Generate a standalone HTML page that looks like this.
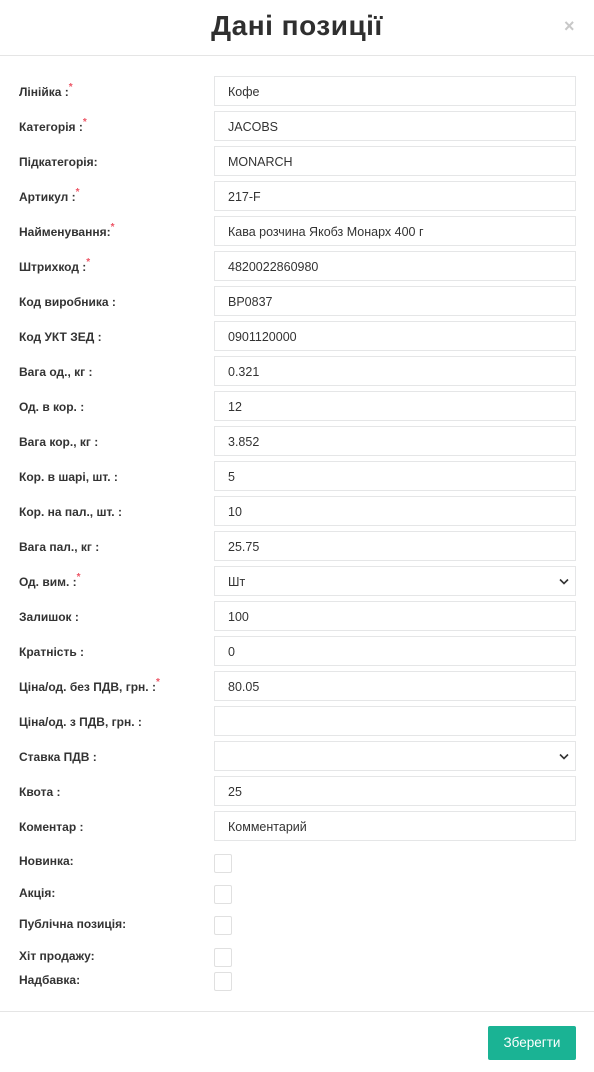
<!DOCTYPE html>
<html><head><meta charset="utf-8"><style>
*{box-sizing:border-box;margin:0;padding:0}
body{width:594px;height:1072px;background:#fff;font-family:"Liberation Sans",sans-serif;color:#333;position:relative;overflow:hidden}
.t{position:absolute;left:0;right:0;top:10px;text-align:center;font-size:28px;font-weight:bold;color:#2f2f2f;letter-spacing:0.5px}
.x{position:absolute;left:564px;top:16px;font-size:18px;color:#c8c8c8;font-weight:bold}
.hl{position:absolute;left:0;right:0;height:1px;background:#e5e5e5}
.l{position:absolute;left:19px;font-size:12px;font-weight:bold;color:#333}
.l i{color:#ed5565;font-style:normal;font-size:10px;position:absolute;margin-left:0px;top:-3px}
.f{position:absolute;left:214px;width:362px;height:30px;border:1px solid #e5e6e7;font-size:12.5px;padding:8px 0 0 13px;color:#333}
.f svg{position:absolute;right:6px;top:11px}
.c{position:absolute;left:214px;width:18px;height:19px;border:1px solid #e0e0e0;border-radius:2px}
.b{position:absolute;left:488px;top:1026px;width:88px;height:34px;background:#1ab394;color:#fff;font-size:13.5px;text-align:center;line-height:34px;border-radius:2px}
</style></head><body>
<div class="t">Дані позиції</div>
<div class="x">×</div>
<div class="hl" style="top:55px"></div>

<div class="l" style="top:85px">Лінійка :<i>*</i></div><div class="f" style="top:76px">Кофе</div>
<div class="l" style="top:120px">Категорія :<i>*</i></div><div class="f" style="top:111px">JACOBS</div>
<div class="l" style="top:155px">Підкатегорія:</div><div class="f" style="top:146px">MONARCH</div>
<div class="l" style="top:190px">Артикул :<i>*</i></div><div class="f" style="top:181px">217-F</div>
<div class="l" style="top:225px">Найменування:<i>*</i></div><div class="f" style="top:216px">Кава розчина Якобз Монарх 400 г</div>
<div class="l" style="top:260px">Штрихкод :<i>*</i></div><div class="f" style="top:251px">4820022860980</div>
<div class="l" style="top:295px">Код виробника :</div><div class="f" style="top:286px">BP0837</div>
<div class="l" style="top:330px">Код УКТ ЗЕД :</div><div class="f" style="top:321px">0901120000</div>
<div class="l" style="top:365px">Вага од., кг :</div><div class="f" style="top:356px">0.321</div>
<div class="l" style="top:400px">Од. в кор. :</div><div class="f" style="top:391px">12</div>
<div class="l" style="top:435px">Вага кор., кг :</div><div class="f" style="top:426px">3.852</div>
<div class="l" style="top:470px">Кор. в шарі, шт. :</div><div class="f" style="top:461px">5</div>
<div class="l" style="top:505px">Кор. на пал., шт. :</div><div class="f" style="top:496px">10</div>
<div class="l" style="top:540px">Вага пал., кг :</div><div class="f" style="top:531px">25.75</div>
<div class="l" style="top:575px">Од. вим. :<i>*</i></div><div class="f" style="top:566px">Шт<svg width="10" height="7" viewBox="0 0 10 7"><path d="M1 1.5L5 5.5L9 1.5" stroke="#333" stroke-width="1.6" fill="none"/></svg></div>
<div class="l" style="top:610px">Залишок :</div><div class="f" style="top:601px">100</div>
<div class="l" style="top:645px">Кратність :</div><div class="f" style="top:636px">0</div>
<div class="l" style="top:680px">Ціна/од. без ПДВ, грн. :<i>*</i></div><div class="f" style="top:671px">80.05</div>
<div class="l" style="top:715px">Ціна/од. з ПДВ, грн. :</div><div class="f" style="top:706px"></div>
<div class="l" style="top:750px">Ставка ПДВ :</div><div class="f" style="top:741px"><svg width="10" height="7" viewBox="0 0 10 7"><path d="M1 1.5L5 5.5L9 1.5" stroke="#333" stroke-width="1.6" fill="none"/></svg></div>
<div class="l" style="top:785px">Квота :</div><div class="f" style="top:776px">25</div>
<div class="l" style="top:820px">Коментар :</div><div class="f" style="top:811px">Комментарий</div>

<div class="l" style="top:854px">Новинка:</div><div class="c" style="top:854px"></div>
<div class="l" style="top:886px">Акція:</div><div class="c" style="top:885px"></div>
<div class="l" style="top:917px">Публічна позиція:</div><div class="c" style="top:916px"></div>
<div class="l" style="top:949px">Хіт продажу:</div><div class="c" style="top:948px"></div>
<div class="l" style="top:973px">Надбавка:</div><div class="c" style="top:972px"></div>

<div class="hl" style="top:1011px"></div>
<div class="b">Зберегти</div>
</body></html>
